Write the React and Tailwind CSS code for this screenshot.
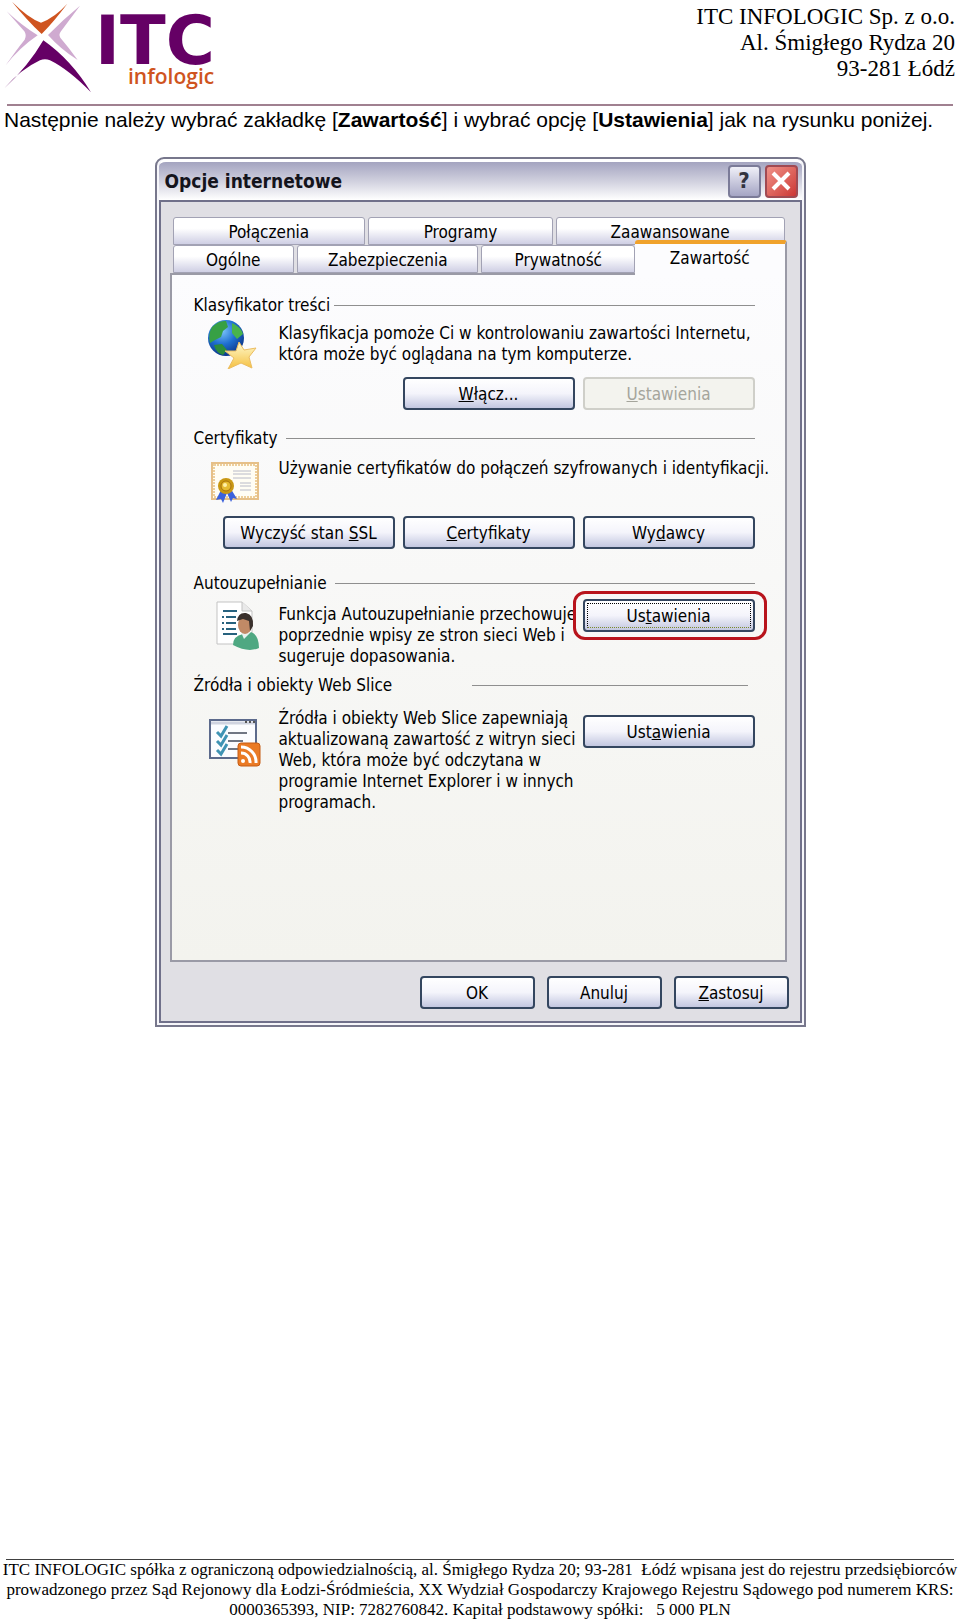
import { useState } from 'react';

const topTabs = ['Połączenia', 'Programy', 'Zaawansowane'];
const bottomTabs = ['Ogólne', 'Zabezpieczenia', 'Prywatność', 'Zawartość'];

function Logo() {
  return (
    <svg width="220" height="96" viewBox="0 0 220 96" role="img" aria-label="ITC infologic">
      <g transform="scale(0.3333)">
        <path d="M36 5 Q85 54 123 68 Q165 52 202 11 Q164 62 125 102 Q82 62 36 5Z" fill="#cf5420" />
        <path d="M20 34 Q64 76 113 106 Q60 142 17 196 Q52 146 74 119 Q81 106 73 94Z" fill="#cfaad0" />
        <path d="M240 17 Q192 56 144 105 Q182 148 233 180 Q206 142 181 113 Q175 104 183 94Z" fill="#cfaad0" />
        <path d="M130 121 Q214 180 273 277 Q205 208 150 181 Q135 174 120 181 Q62 208 13 265 Q84 200 130 121Z" fill="#650065" />
      </g>
      <text x="95" y="64" fontSize="67" fontWeight="700" fill="#650065" fontFamily="DejaVu Sans, sans-serif">ITC</text>
      <text x="128" y="84" fontSize="21" fontWeight="600" fill="#cf5420" fontFamily="Open Sans, sans-serif">infologic</text>
    </svg>
  );
}

function GlobeIcon() {
  return (
    <svg width="50" height="50" viewBox="0 0 50 50" aria-hidden="true">
      <defs>
        <radialGradient id="sea" cx="0.4" cy="0.3" r="0.75">
          <stop offset="0" stopColor="#7cc4fa" />
          <stop offset="0.5" stopColor="#1f6fd0" />
          <stop offset="1" stopColor="#0a2f80" />
        </radialGradient>
        <linearGradient id="star" x1="0" y1="0" x2="0" y2="1">
          <stop offset="0" stopColor="#fffbd0" />
          <stop offset="1" stopColor="#f5c040" />
        </linearGradient>
      </defs>
      <circle cx="18" cy="19" r="18" fill="url(#sea)" />
      <path d="M4 8 Q11 1 18 2 L20 8 L15 12 L13 18 L7 21 L2 24 Q0 15 4 8Z" fill="#37a044" />
      <path d="M24 4 Q33 8 35 15 L29 20 L24 14Z" fill="#49b34c" />
      <path d="M6 26 L14 25 L19 31 L15 36 Q8 34 6 26Z" fill="#2c8c3c" />
      <path d="M31 23 L36 31 L48 29 L41 38 L44 49 L33 44 L20 50 L26 39 L17 32 L28 32Z" fill="url(#star)" stroke="#ebbd62" />
    </svg>
  );
}

function CertificateIcon() {
  return (
    <svg width="50" height="42" viewBox="0 0 50 42" aria-hidden="true">
      <rect x="2" y="1" width="46" height="36" fill="#fffdf4" stroke="#e6c088" strokeWidth="2" />
      <rect x="4" y="3" width="42" height="32" fill="none" stroke="#edcf9c" strokeWidth="2" strokeDasharray="2 1" />
      <path d="M23 9h18M23 12h18M23 16h18M30 21h11M30 24h11M30 28h11" stroke="#b8bac8" />
      <path d="M11 28 L6 38 L11 37 L13 41 L17 31 L21 40 L23 36 L27 37 L21 27Z" fill="#3c62dc" />
      <circle cx="16" cy="24" r="8" fill="#c99812" />
      <circle cx="16" cy="24" r="5" fill="#e5bc34" stroke="#a8700c" />
      <circle cx="15" cy="23" r="2" fill="#fff0a8" />
    </svg>
  );
}

function FormIcon() {
  return (
    <svg width="44" height="50" viewBox="0 0 44 50" aria-hidden="true">
      <path d="M1 1 H26 L36 10 V43 H1Z" fill="#fff" stroke="#c3c3c3" />
      <path d="M26 1 V10 H36" fill="#e9e9e9" stroke="#c3c3c3" />
      <path d="M7 10h14M10 16h10M10 22h10M10 28h10M7 33h14" stroke="#27627e" strokeWidth="2" />
      <path d="M6 16h2M6 22h2M6 28h2" stroke="#27627e" strokeWidth="2" />
      <path d="M17 44 Q17 35 27 33 L35 31 Q43 34 43 47 Q32 52 17 44Z" fill="#4fa882" />
      <path d="M25 31 L28 38 L35 31Z" fill="#e8f3ef" />
      <ellipse cx="29" cy="24" rx="7" ry="9" fill="#c18a66" />
      <path d="M21 20 Q22 11 30 12 Q38 14 37 25 L34 30 L33 20 L27 18Z" fill="#3a302c" />
    </svg>
  );
}

function FeedIcon() {
  return (
    <svg width="52" height="48" viewBox="0 0 52 48" aria-hidden="true">
      <rect x="1" y="1" width="46" height="38" fill="#fbfcff" stroke="#5c6a8c" strokeWidth="2" />
      <path d="M2 4h44" stroke="#cfd3e0" strokeWidth="3" />
      <path d="M36 3h2M40 3h2M44 3h2" stroke="#555" strokeWidth="2" />
      <path d="M19 14h19M19 22h15M19 30h10" stroke="#707684" strokeWidth="2" />
      <path d="M8 13l4 4 6-10M8 22l4 4 6-10M8 31l4 4 6-10" stroke="#3f93b4" strokeWidth="3" fill="none" />
      <rect x="29" y="24" width="22" height="23" rx="3" fill="#ea7a25" stroke="#c65c14" />
      <circle cx="34" cy="42" r="2" fill="#fff" />
      <path d="M32 34a9 9 0 0 1 9 10M32 28a15 15 0 0 1 15 16" stroke="#fff" strokeWidth="3" fill="none" />
    </svg>
  );
}

function XpButton({ children, className = 'w-[172px]', focused, ...props }) {
  return (
    <button
      type="button"
      className={`relative h-[33px] shrink-0 rounded-[4px] border-2 border-[#34465f] bg-linear-to-b from-white via-[#f4f4fb] to-[#c3c7e0] text-black disabled:border-[#cfcfc9] disabled:bg-none disabled:bg-[#f3f3ee] disabled:text-[#a5a59c] ${className}`}
      {...props}
    >
      {focused && <span className="absolute inset-[2px] border border-dotted border-black border-b-[#7d8a2c]" />}
      {children}
    </button>
  );
}

function SectionTitle({ children, gap = 'gap-2', end = '' }) {
  return (
    <div className={`flex items-center ${gap} ${end}`}>
      <h2 className="leading-5 whitespace-nowrap">{children}</h2>
      <div className="h-px flex-1 bg-[#8f8f8f]" />
    </div>
  );
}

function Tab({ label, active, onClick }) {
  const look = active
    ? '-mt-[5px] -ml-[3px] -mb-[2px] z-10 h-[35px] rounded-t-[3px] border-t-[4px] border-r-2 border-t-[#f0a22c] border-r-[#9a9aa6] bg-[#fcfcfe] pb-1'
    : 'h-[28px] rounded-t-[3px] border border-[#a2a2b4] bg-linear-to-b from-white from-40% to-[#cfcfe4] pt-[2px]';
  return (
    <button type="button" role="tab" aria-selected={active} onClick={onClick} className={look}>
      {label}
    </button>
  );
}

function InternetOptions() {
  const [tab, setTab] = useState('Zawartość');

  return (
    <div className="mx-auto w-full max-w-[651px] rounded-t-[9px] border-2 border-[#77778c] bg-[#f6f6fa] px-[2px] pb-[2px] font-['DejaVu_Sans_Condensed','DejaVu_Sans',sans-serif] text-[17px] leading-5 text-black">
      <div className="flex h-[41px] items-center justify-between rounded-t-[7px] border-t-[3px] border-white bg-linear-to-b from-[#a4a4c0] via-[#d0d0de] to-white pr-1 pl-[6px]">
        <h1 className="text-[19px] font-bold text-[#14141c]">Opcje internetowe</h1>
        <div className="flex gap-1">
          <button type="button" aria-label="Pomoc" className="flex size-[33px] items-center justify-center rounded-[4px] border-2 border-[#7b7b98] bg-linear-to-b from-[#f0f0f8] to-[#a5a5c4] text-[22px] font-bold text-[#33333f]">
            ?
          </button>
          <button type="button" aria-label="Zamknij" className="flex size-[33px] items-center justify-center rounded-[4px] border-2 border-[#a04a52] bg-linear-to-br from-[#ee9088] to-[#cc3434]">
            <svg width="22" height="22" viewBox="0 0 22 22">
              <path d="M3 3 L19 19 M19 3 L3 19" stroke="#fff" strokeWidth="4" />
            </svg>
          </button>
        </div>
      </div>

      <div className="border-2 border-[#70708a] bg-[#e0dfe4] pt-[15px] pr-[13px] pb-[12px] pl-[9px]">
        <div role="tablist">
          <div className="grid grid-cols-[192fr_184fr_228fr] gap-[3px] pr-[2px] pl-[3px]">
            {topTabs.map((t) => (
              <Tab key={t} label={t} active={false} onClick={() => setTab('Zawartość')} />
            ))}
          </div>
          <div className="grid grid-cols-[122fr_182fr_154fr_149fr] gap-[3px] pl-[3px]">
            {bottomTabs.map((t) => (
              <Tab key={t} label={t} active={t === tab} onClick={() => setTab(t)} />
            ))}
          </div>
        </div>

        <div role="tabpanel" className="min-h-[689px] border-2 border-[#9a9aa6] bg-linear-to-b from-[#fcfcfe] to-[#f3f3ee] pt-5 pr-[30px] pb-6 pl-[22px]">
          <section>
            <SectionTitle gap="gap-1">Klasyfikator treści</SectionTitle>
            <div className="mt-2 flex">
              <div className="-mt-1 -mb-2 w-[85px] shrink-0 pl-[14px]"><GlobeIcon /></div>
              <p className="leading-[21px] whitespace-nowrap">
                Klasyfikacja pomoże Ci w kontrolowaniu zawartości Internetu,<br />
                która może być oglądana na tym komputerze.
              </p>
            </div>
            <div className="mt-3 flex justify-end gap-2">
              <XpButton><u>W</u>łącz...</XpButton>
              <XpButton disabled><u>U</u>stawienia</XpButton>
            </div>
          </section>

          <section className="mt-[18px]">
            <SectionTitle>Certyfikaty</SectionTitle>
            <div className="mt-[10px] flex">
              <div className="w-[85px] shrink-0 pt-1 pl-[16px]"><CertificateIcon /></div>
              <p className="leading-[21px] whitespace-nowrap">
                Używanie certyfikatów do połączeń szyfrowanych i identyfikacji.
              </p>
            </div>
            <div className="mt-3 flex justify-end gap-2">
              <XpButton>Wyczyść stan <u>S</u>SL</XpButton>
              <XpButton><u>C</u>ertyfikaty</XpButton>
              <XpButton>Wy<u>d</u>awcy</XpButton>
            </div>
          </section>

          <section className="mt-6">
            <SectionTitle>Autouzupełnianie</SectionTitle>
            <div className="mt-[6px] flex">
              <div className="w-[85px] shrink-0 pt-[2px] pl-[22px]"><FormIcon /></div>
              <p className="w-0 flex-1 pt-[5px] leading-[21px] whitespace-nowrap">
                Funkcja Autouzupełnianie przechowuje<br />
                poprzednie wpisy ze stron sieci Web i<br />
                sugeruje dopasowania.
              </p>
              <div className="relative self-start">
                <XpButton focused>Us<u>t</u>awienia</XpButton>
                <div className="pointer-events-none absolute -top-2 -right-3 -bottom-2 -left-[10px] rounded-[12px] border-[3px] border-[#b8141c]" />
              </div>
            </div>
          </section>

          <section className="mt-2">
            <SectionTitle gap="gap-20" end="pr-[7px]">Źródła i obiekty Web Slice</SectionTitle>
            <div className="mt-3 flex">
              <div className="w-[85px] shrink-0 pt-3 pl-[15px]"><FeedIcon /></div>
              <p className="w-0 flex-1 pt-px leading-[21px] whitespace-nowrap">
                Źródła i obiekty Web Slice zapewniają<br />
                aktualizowaną zawartość z witryn sieci<br />
                Web, która może być odczytana w<br />
                programie Internet Explorer i w innych<br />
                programach.
              </p>
              <div className="pt-2">
                <XpButton>Ust<u>a</u>wienia</XpButton>
              </div>
            </div>
          </section>
        </div>

        <div className="-mr-[2px] mt-[14px] flex justify-end gap-3">
          <XpButton className="w-[115px]">OK</XpButton>
          <XpButton className="w-[115px]">Anuluj</XpButton>
          <XpButton className="w-[115px]"><u>Z</u>astosuj</XpButton>
        </div>
      </div>
    </div>
  );
}

export default function App() {
  return (
    <div className="flex min-h-screen flex-col bg-white text-black">
      <header className="mx-[7px] flex justify-between border-b-2 border-[#a08090] pb-2">
        <div className="-ml-[7px]"><Logo /></div>
        <address className="-mr-[2px] pt-1 text-right font-['Liberation_Serif',serif] text-[23px] leading-[26px] not-italic">
          ITC INFOLOGIC Sp. z o.o.<br />
          Al. Śmigłego Rydza 20<br />
          93-281 Łódź
        </address>
      </header>

      <main>
        <p className="px-1 pt-px pb-6 font-['Liberation_Sans',sans-serif] text-[21px] leading-[26px]">
          Następnie należy wybrać zakładkę [<b>Zawartość</b>] i wybrać opcję [<b>Ustawienia</b>] jak na rysunku poniżej.
        </p>
        <InternetOptions />
      </main>

      <footer className="mt-auto text-center font-['Liberation_Serif',serif] text-[17px] leading-5 whitespace-pre">
        <hr className="mx-[6px] border-[#404040]" />
        <p>ITC INFOLOGIC spółka z ograniczoną odpowiedzialnością, al. Śmigłego Rydza 20; 93-281  Łódź wpisana jest do rejestru przedsiębiorców</p>
        <p>prowadzonego przez Sąd Rejonowy dla Łodzi-Śródmieścia, XX Wydział Gospodarczy Krajowego Rejestru Sądowego pod numerem KRS:</p>
        <p>0000365393, NIP: 7282760842. Kapitał podstawowy spółki:   5 000 PLN</p>
      </footer>
    </div>
  );
}
